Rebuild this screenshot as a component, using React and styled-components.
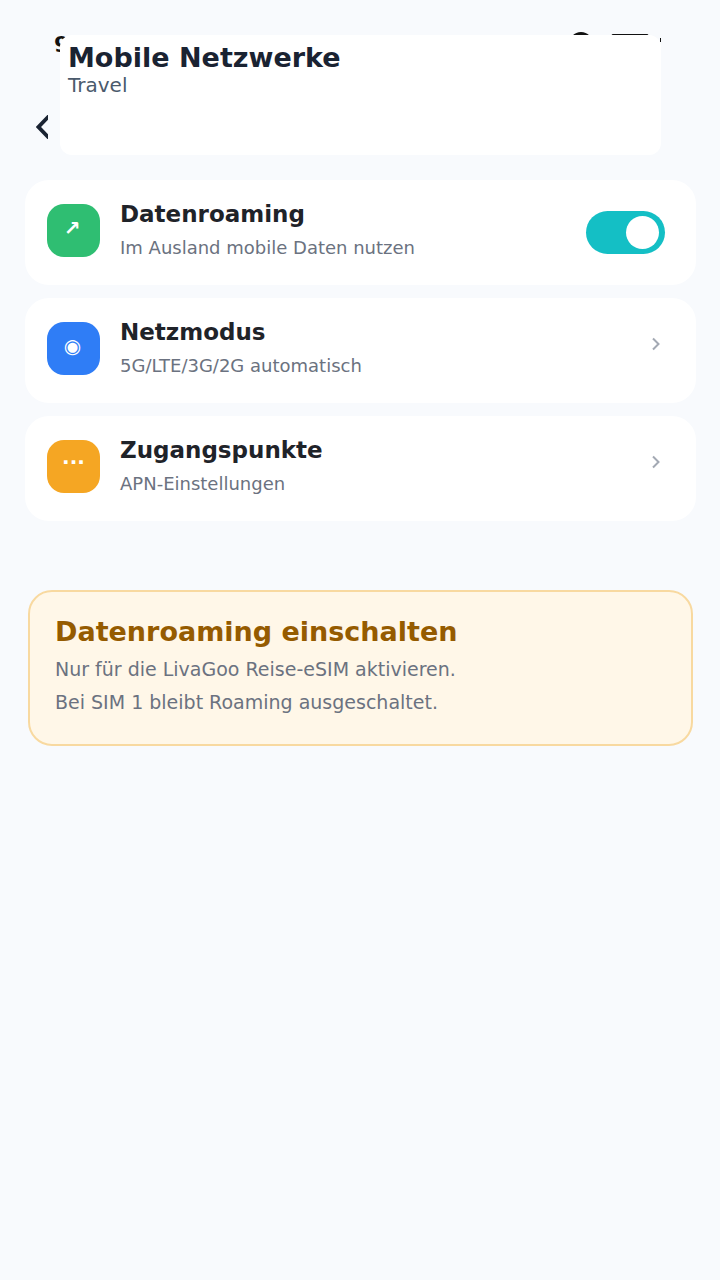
import React from "react";
import styled, { createGlobalStyle } from "styled-components";

const Global = createGlobalStyle`
  html, body { margin: 0; padding: 0; background: #f8fafd; }
  body { font-family: "DejaVu Sans", sans-serif; }
`;

const Page = styled.div`
  position: relative;
  width: 720px;
  height: 1280px;
  overflow: hidden;
  background: #f8fafd;
  box-sizing: border-box;
`;

const StatusBar = styled.div`
  display: flex;
  justify-content: space-between;
  align-items: flex-start;
  height: 36px;
  padding: 32px 59px 0 54px;
  overflow: hidden;
  color: #111;
`;

const Clock = styled.span`
  font-size: 22px;
  font-weight: 700;
  line-height: 26px;
`;

const StatusIcons = styled.div`
  display: flex;
  align-items: flex-start;
`;

const Wifi = styled.div`
  width: 24px;
  height: 24px;
  margin-right: 18.5px;
  border: 3px solid #111;
  border-radius: 50%;
  box-sizing: border-box;
`;

const Battery = styled.div`
  width: 38px;
  height: 18px;
  margin-top: 2px;
  border: 1.5px solid #111;
  border-radius: 2px;
  box-sizing: border-box;
`;

const BatteryTip = styled.div`
  width: 1.5px;
  height: 4px;
  margin: 6px 0 0 10.5px;
  background: #111;
`;

const BackButton = styled.div`
  padding: 47px 0 0 36px;
  height: 65px;
  width: 12px;
  overflow: hidden;
`;

const HeaderPanel = styled.div`
  position: absolute;
  left: 60px;
  top: 35px;
  width: 601px;
  height: 120px;
  box-sizing: border-box;
  padding: 6px 8px;
  background: #fff;
  border-radius: 12px;
`;

const Title = styled.div`
  font-size: 27px;
  font-weight: 700;
  line-height: 34px;
  color: #1a2332;
`;

const Subtitle = styled.div`
  margin-top: -2px;
  font-size: 20px;
  line-height: 24px;
  color: #4a5a6c;
`;

const List = styled.div`
  display: flex;
  flex-direction: column;
  gap: 13px;
  padding: 0 24px 0 25px;
`;

const Row = styled.div`
  display: flex;
  align-items: center;
  height: 105px;
  padding: 0 31px 0 22px;
  box-sizing: border-box;
  background: #fff;
  border-radius: 24px;
`;

const IconTile = styled.div`
  display: flex;
  align-items: center;
  justify-content: center;
  flex: none;
  width: 53px;
  height: 53px;
  margin-top: -4px;
  border-radius: 17px;
  background: ${(p) => p.$bg};
`;

const IconGlyph = styled.span`
  margin: ${(p) => p.$mt}px 0 0 ${(p) => p.$ml}px;
  font-size: 20px;
  font-weight: 700;
  line-height: 24px;
  color: #fff;
`;

const RowText = styled.div`
  flex: 1;
  margin-left: 20px;
  margin-top: -6px;
`;

const RowTitle = styled.div`
  font-size: 23px;
  font-weight: 700;
  line-height: 30px;
  color: #1f2329;
`;

const RowSub = styled.div`
  margin-top: 7px;
  font-size: 18px;
  line-height: 24px;
  color: #6b7280;
`;

const Toggle = styled.div`
  display: flex;
  align-items: center;
  justify-content: flex-end;
  width: 79px;
  height: 43px;
  padding-right: 6px;
  box-sizing: border-box;
  border-radius: 22px;
  background: #14bfc5;
`;

const Knob = styled.div`
  width: 33px;
  height: 33px;
  border-radius: 50%;
  background: #fff;
`;

const Chevron = styled.svg`
  width: 10px;
  height: 14px;
  margin: -13px 3.6px 0 0;
  fill: none;
  stroke: #a3a9b3;
  stroke-width: 2;
`;

const Notice = styled.div`
  margin: 69px 27px 0 28px;
  height: 156px;
  padding: 24px 25px;
  box-sizing: border-box;
  background: #fff7e8;
  border: 2px solid #f8d9a0;
  border-radius: 24px;
`;

const NoticeTitle = styled.div`
  font-size: 27px;
  font-weight: 700;
  line-height: 32px;
  color: #955b00;
`;

const NoticeLine = styled.div`
  margin-top: ${(p) => p.$mt}px;
  font-size: 19px;
  line-height: 24px;
  color: #6b7280;
`;

const Next = () => (
  <Chevron viewBox="0 0 10 14"><path d="M2 1.5 L7.5 7 L2 12.5" /></Chevron>
);

const rows = [
  { t: "Datenroaming", s: "Im Ausland mobile Daten nutzen", bg: "#2fbe72", icon: "↗", mt: -6, ml: -2, end: <Toggle><Knob /></Toggle> },
  { t: "Netzmodus", s: "5G/LTE/3G/2G automatisch", bg: "#2f7df6", icon: "◉", mt: -6, ml: -2, end: <Next /> },
  { t: "Zugangspunkte", s: "APN-Einstellungen", bg: "#f5a623", icon: "···", mt: -9, ml: 0, end: <Next /> },
];

export default function App() {
  return (
    <Page>
      <Global />
      <StatusBar>
        <Clock>9:41</Clock>
        <StatusIcons><Wifi /><Battery /><BatteryTip /></StatusIcons>
      </StatusBar>
      <BackButton>
        <svg width="12" height="24" viewBox="0 0 12 24" fill="none" stroke="#1a2332" strokeWidth="3.8">
          <path d="M14 0 L2.5 12 L14 24" />
        </svg>
      </BackButton>
      <HeaderPanel>
        <Title>Mobile Netzwerke</Title>
        <Subtitle>Travel</Subtitle>
      </HeaderPanel>
      <List>
        {rows.map((r) => (
          <Row key={r.t}>
            <IconTile $bg={r.bg}><IconGlyph $mt={r.mt} $ml={r.ml}>{r.icon}</IconGlyph></IconTile>
            <RowText>
              <RowTitle>{r.t}</RowTitle>
              <RowSub>{r.s}</RowSub>
            </RowText>
            {r.end}
          </Row>
        ))}
      </List>
      <Notice>
        <NoticeTitle>Datenroaming einschalten</NoticeTitle>
        <NoticeLine $mt={9}>Nur für die LivaGoo Reise-eSIM aktivieren.</NoticeLine>
        <NoticeLine $mt={9}>Bei SIM 1 bleibt Roaming ausgeschaltet.</NoticeLine>
      </Notice>
    </Page>
  );
}
